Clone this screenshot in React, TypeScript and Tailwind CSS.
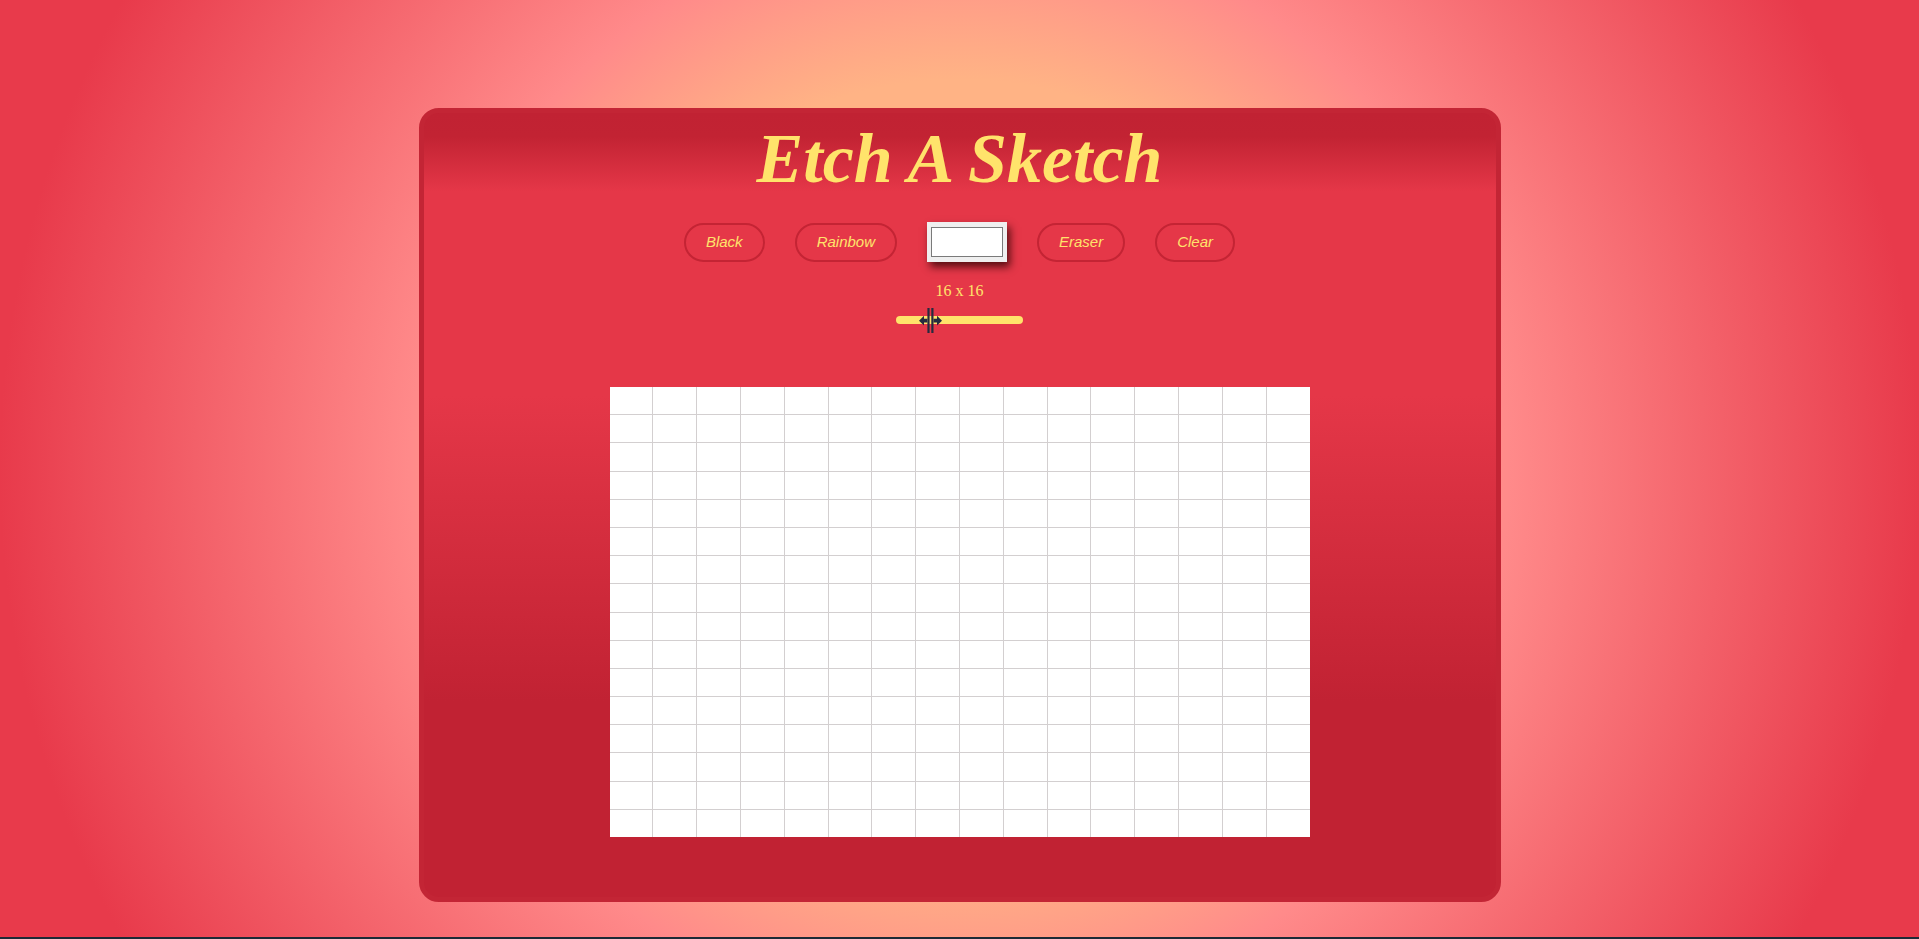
import { useState } from 'react';

const cells = Array.from({ length: 256 }, (_, i) => i);

const ModeButton = ({ label }: { label: string }) => {
  return (
    <button className="flex h-[39px] items-center rounded-full border-2 border-[#c42434] bg-transparent px-5 font-['Liberation_Sans',Arial,sans-serif] text-[15px] italic text-[#ffe36b]">
      {label}
    </button>
  );
};

const ResizeCursor = () => {
  return (
    <svg
      className="pointer-events-none absolute left-[23px] top-[-8px]"
      width="24"
      height="25"
      viewBox="0 0 24 25"
    >
      <rect x="8.4" y="0" width="2.2" height="25" fill="#262b3f" />
      <rect x="12.3" y="0" width="2.2" height="25" fill="#262b3f" />
      <polygon points="0,12.7 5,7.8 5,10.8 8.4,10.8 8.4,14.6 5,14.6 5,17.6" fill="#262b3f" />
      <polygon points="23,12.7 18,7.8 18,10.8 14.5,10.8 14.5,14.6 18,14.6 18,17.6" fill="#262b3f" />
    </svg>
  );
};

const App = () => {
  const [size, setSize] = useState(16);

  return (
    <div className="flex h-screen flex-col overflow-hidden bg-[radial-gradient(circle_at_50%_50%,#ffb385_0px,#ffb385_390px,#ff8a8a_550px,#e83a4b_960px)]">
      <main className="flex flex-1 justify-center pt-[108px]">
        <section className="flex h-[794px] w-[1082px] flex-col items-center rounded-[20px] border-[5px] border-[#c32535] bg-[linear-gradient(to_bottom,#c12233_0%,#c22333_3%,#e53748_10%,#e53748_36%,#c12233_75%,#c12233_100%)] pt-[11px]">
          <h1 className="font-['Liberation_Serif','Times_New_Roman',serif] text-[70px] font-bold italic leading-none text-[#ffe36b]">
            Etch A Sketch
          </h1>

          <div className="mt-[28px] flex items-center gap-[30px]">
            <ModeButton label="Black" />
            <ModeButton label="Rainbow" />
            <div className="flex h-[40px] w-[80px] items-center justify-center bg-[#efefef] shadow-[3px_5px_8px_rgba(40,0,0,0.75)]">
              <div className="h-[30px] w-[72px] border border-[#7a7a7a] bg-white" />
            </div>
            <ModeButton label="Eraser" />
            <ModeButton label="Clear" />
          </div>

          <p className="mt-[20px] font-['Liberation_Serif','Times_New_Roman',serif] text-[16px] leading-[18px] text-[#ffe36b]">
            {size} x {size}
          </p>

          <div className="relative mt-[16px] h-[8px] w-[127px]">
            <input
              type="range"
              min={1}
              max={64}
              value={size}
              onChange={(e) => setSize(Number(e.target.value))}
              className="block h-[8px] w-[127px] cursor-col-resize appearance-none rounded-full bg-[#ffe36b] [&::-webkit-slider-thumb]:h-[8px] [&::-webkit-slider-thumb]:w-[8px] [&::-webkit-slider-thumb]:appearance-none [&::-webkit-slider-thumb]:bg-[#ffe36b]"
            />
            <ResizeCursor />
          </div>

          <div className="mt-[63px] grid h-[450px] w-[700px] grid-cols-16 grid-rows-16 gap-px bg-[#d3cfd0]">
            {cells.map((i) => (
              <div key={i} className="bg-white" />
            ))}
          </div>
        </section>
      </main>
      <div className="h-[2px] bg-[#1c2a36]" />
    </div>
  );
};

export default App;
